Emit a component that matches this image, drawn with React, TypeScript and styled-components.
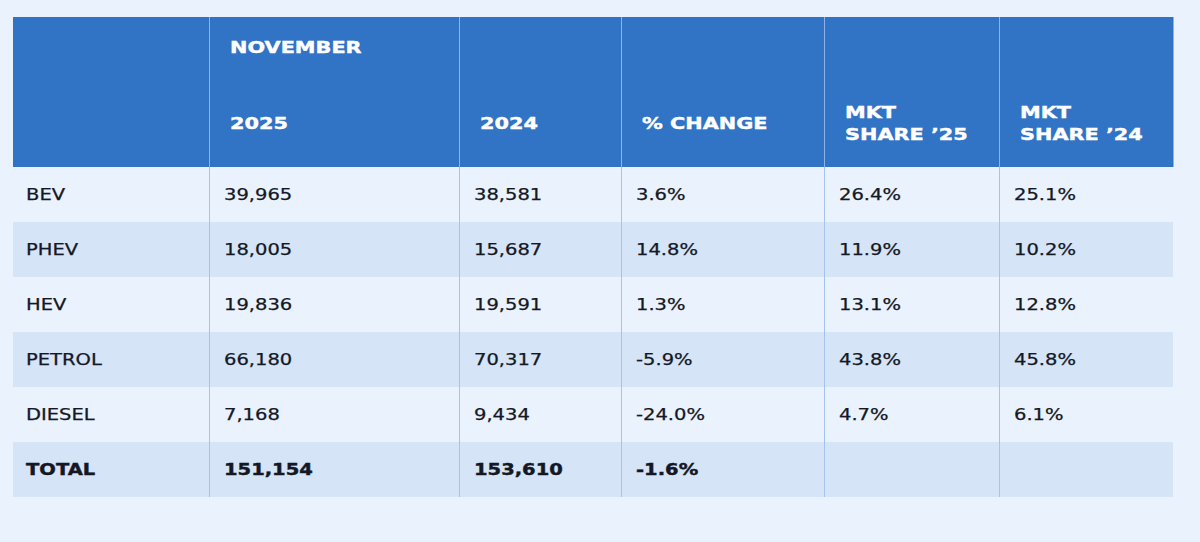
import styled, { createGlobalStyle } from 'styled-components'

const GlobalStyle = createGlobalStyle`
  * {
    margin: 0;
    padding: 0;
    box-sizing: border-box;
  }
  body {
    background: #eaf2fd;
    font-family: "DejaVu Sans", "Liberation Sans", sans-serif;
    color: #141824;
  }
`

const Page = styled.div`
  padding: 17px 0 0 13px;
`

const Table = styled.table`
  width: 1160px;
  border-collapse: collapse;
  table-layout: fixed;
`

const HeadRow = styled.tr<{ $tall?: boolean }>`
  height: ${({ $tall }) => ($tall ? 87 : 63)}px;
  background: #3173c4;
`

const HeadCell = styled.th<{ $top?: boolean }>`
  padding-left: 20px;
  padding-top: ${({ $top }) => ($top ? 20 : 0)}px;
  text-align: left;
  vertical-align: ${({ $top }) => ($top ? 'top' : 'middle')};
  font-size: 16px;
  font-weight: 700;
  line-height: 22px;
  color: #ffffff;
  -webkit-text-stroke: 0.4px #ffffff;
  border-right: 1px solid #8db2e3;
`

const BodyRow = styled.tr<{ $shaded?: boolean }>`
  height: 55px;
  background: ${({ $shaded }) => ($shaded ? '#d5e4f7' : '#eaf2fd')};
`

const Cell = styled.td<{ $bold?: boolean }>`
  padding-left: 14px;
  font-size: 15px;
  font-weight: ${({ $bold }) => ($bold ? 700 : 400)};
  vertical-align: middle;
  -webkit-text-stroke: ${({ $bold }) => ($bold ? 0.4 : 0.25)}px #141824;
  border-right: 1px solid #a6c4ea;

  &:first-child {
    padding-left: 13px;
  }
  &:last-child {
    border-right: none;
  }
`

// the source face is an extended grotesk; widen DejaVu to match
const Wide = styled.span`
  display: inline-block;
  transform: scaleX(1.3);
  transform-origin: left center;
  white-space: nowrap;
`

const rows = [
  ['BEV', '39,965', '38,581', '3.6%', '26.4%', '25.1%'],
  ['PHEV', '18,005', '15,687', '14.8%', '11.9%', '10.2%'],
  ['HEV', '19,836', '19,591', '1.3%', '13.1%', '12.8%'],
  ['PETROL', '66,180', '70,317', '-5.9%', '43.8%', '45.8%'],
  ['DIESEL', '7,168', '9,434', '-24.0%', '4.7%', '6.1%'],
  ['TOTAL', '151,154', '153,610', '-1.6%', '', ''],
]

const widths = [196, 250, 162, 203, 175, 174]

export default function App() {
  return (
    <>
      <GlobalStyle />
      <Page>
        <Table>
          <colgroup>
            {widths.map((w, i) => (
              <col key={i} style={{ width: w }} />
            ))}
          </colgroup>
          <thead>
            <HeadRow>
              <HeadCell $top />
              <HeadCell $top>
                <Wide>NOVEMBER</Wide>
              </HeadCell>
              <HeadCell $top />
              <HeadCell $top />
              <HeadCell $top />
              <HeadCell $top />
            </HeadRow>
            <HeadRow $tall>
              <HeadCell />
              <HeadCell>
                <Wide>2025</Wide>
              </HeadCell>
              <HeadCell>
                <Wide>2024</Wide>
              </HeadCell>
              <HeadCell>
                <Wide>% CHANGE</Wide>
              </HeadCell>
              <HeadCell>
                <Wide>
                  MKT
                  <br />
                  SHARE ’25
                </Wide>
              </HeadCell>
              <HeadCell>
                <Wide>
                  MKT
                  <br />
                  SHARE ’24
                </Wide>
              </HeadCell>
            </HeadRow>
          </thead>
          <tbody>
            {rows.map((r, i) => (
              <BodyRow key={r[0]} $shaded={i % 2 === 1}>
                {r.map((v, j) => (
                  <Cell key={j} $bold={r[0] === 'TOTAL'}>
                    <Wide>{v}</Wide>
                  </Cell>
                ))}
              </BodyRow>
            ))}
          </tbody>
        </Table>
      </Page>
    </>
  )
}
